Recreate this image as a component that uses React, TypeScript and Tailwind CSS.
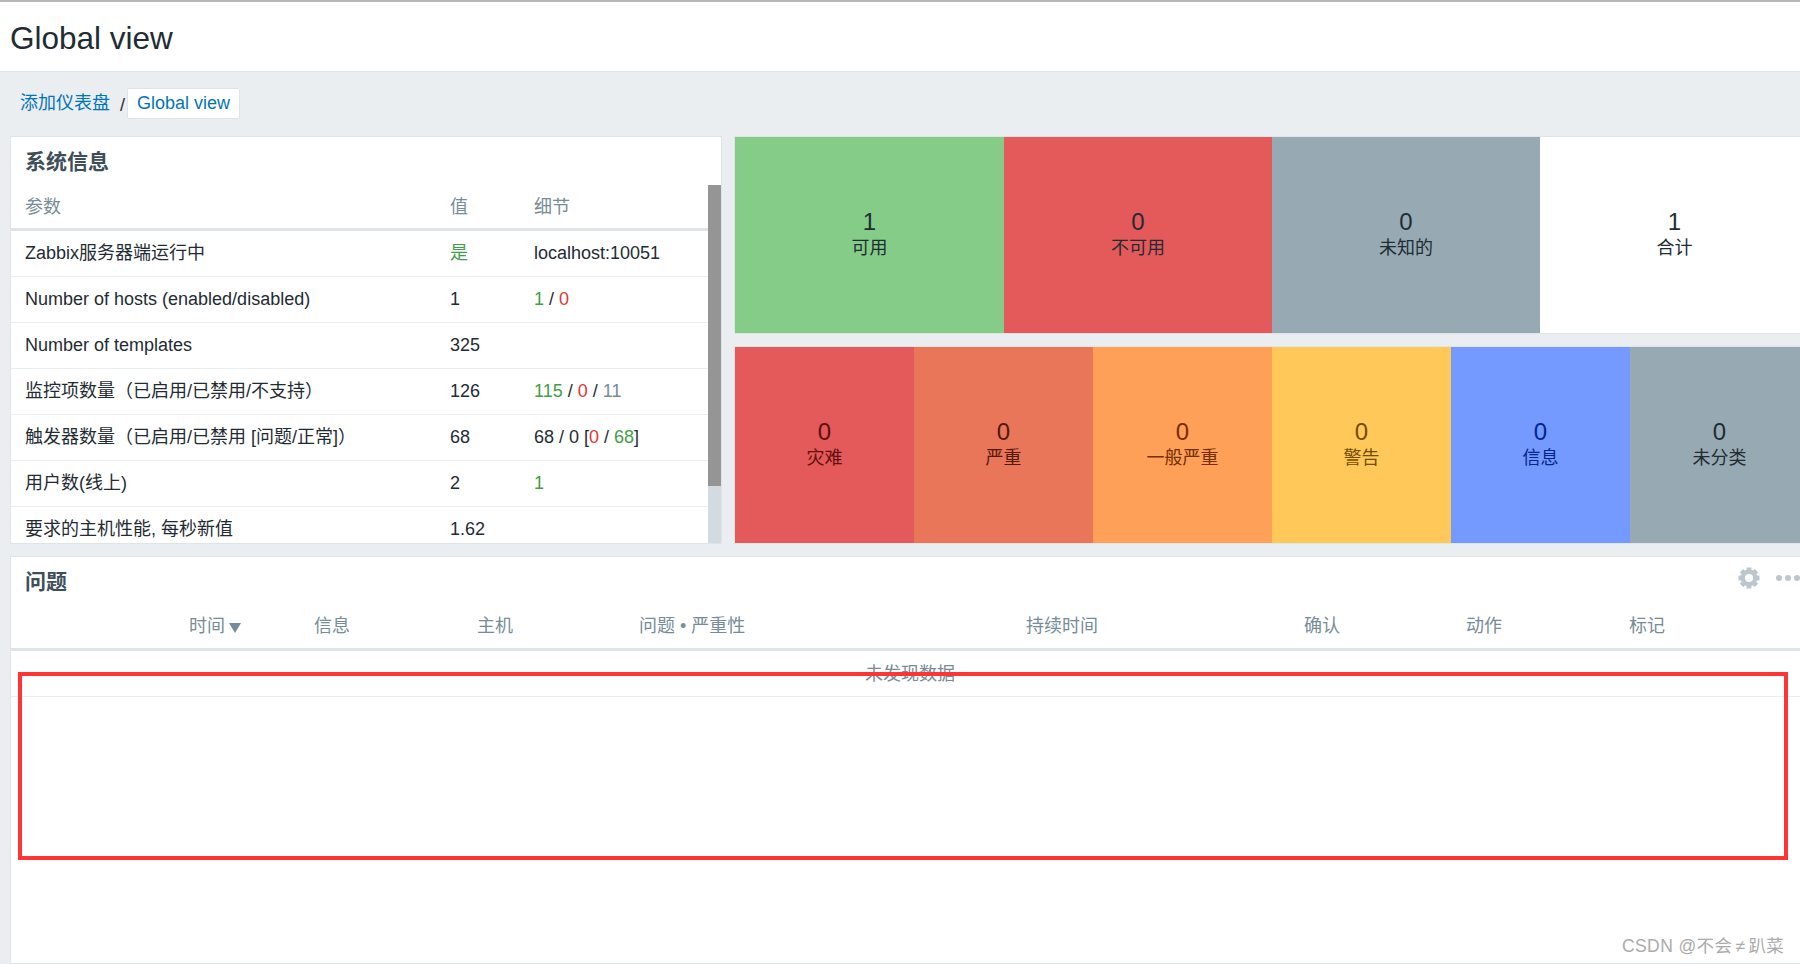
import React from 'react';

const font = 'font-["Liberation_Sans","Noto_Sans_CJK_SC",sans-serif]';

const statusTiles = [
  { value: '1', label: '可用', className: 'w-[269px] bg-[#86cc89] text-[#1f2c33]' },
  { value: '0', label: '不可用', className: 'w-[268px] bg-[#e45959] text-[#1f2c33]' },
  { value: '0', label: '未知的', className: 'w-[268px] bg-[#97aab3] text-[#1f2c33]' },
  { value: '1', label: '合计', className: 'w-[269px] bg-white text-[#1f2c33]' },
];

const severityTiles = [
  { value: '0', label: '灾难', className: 'w-[179px] bg-[#e45959] text-[#5f0f0f]' },
  { value: '0', label: '严重', className: 'w-[179px] bg-[#e97659] text-[#52190b]' },
  { value: '0', label: '一般严重', className: 'w-[179px] bg-[#ffa059] text-[#732f00]' },
  { value: '0', label: '警告', className: 'w-[179px] bg-[#ffc859] text-[#734d00]' },
  { value: '0', label: '信息', className: 'w-[179px] bg-[#7499ff] text-[#00268e]' },
  { value: '0', label: '未分类', className: 'w-[179px] bg-[#97aab3] text-[#1f2c33]' },
];

const Green = ({ children }: { children: React.ReactNode }) => <span className="text-[#429e47]">{children}</span>;
const Red = ({ children }: { children: React.ReactNode }) => <span className="text-[#e33734]">{children}</span>;
const Gray = ({ children }: { children: React.ReactNode }) => <span className="text-[#768d99]">{children}</span>;

const infoRows: { name: string; value: React.ReactNode; detail?: React.ReactNode }[] = [
  { name: 'Zabbix服务器端运行中', value: <Green>是</Green>, detail: 'localhost:10051' },
  { name: 'Number of hosts (enabled/disabled)', value: '1', detail: <><Green>1</Green> / <Red>0</Red></> },
  { name: 'Number of templates', value: '325' },
  { name: '监控项数量（已启用/已禁用/不支持）', value: '126', detail: <><Green>115</Green> / <Red>0</Red> / <Gray>11</Gray></> },
  { name: '触发器数量（已启用/已禁用 [问题/正常]）', value: '68', detail: <>68 / 0 [<Red>0</Red> / <Green>68</Green>]</> },
  { name: '用户数(线上)', value: '2', detail: <Green>1</Green> },
  { name: '要求的主机性能, 每秒新值', value: '1.62' },
];

const problemCols = [
  { label: '时间', width: 'w-[125px]', sort: true },
  { label: '信息', width: 'w-[163px]' },
  { label: '主机', width: 'w-[162px]' },
  { label: '问题 • 严重性', width: 'w-[387px]' },
  { label: '持续时间', width: 'w-[278px]' },
  { label: '确认', width: 'w-[162px]' },
  { label: '动作', width: 'w-[163px]' },
  { label: '标记', width: 'w-[100px]' },
];

function Gear() {
  return (
    <svg viewBox="0 0 22 22" className="w-[22px] h-[22px]" fill="#bbc6cd">
      {[0, 45, 90, 135, 180, 225, 270, 315].map((deg) => (
        <rect key={deg} x="8.6" y="0.5" width="4.8" height="5" transform={`rotate(${deg} 11 11)`} />
      ))}
      <circle cx="11" cy="11" r="6.2" fill="none" stroke="#bbc6cd" strokeWidth="4.4" />
    </svg>
  );
}

function Tile({ value, label, className }: { value: string; label: string; className: string }) {
  return (
    <div className={`shrink-0 flex flex-col items-center justify-center ${className}`}>
      <div className="text-[24px] leading-[26px]">{value}</div>
      <div className="text-[18px] leading-[26px]">{label}</div>
    </div>
  );
}

function SystemInfo() {
  return (
    <div className="w-[712px] h-[408px] shrink-0 bg-white border border-[#dfe4e7] flex flex-col overflow-hidden">
      <h4 className="h-[48px] shrink-0 pl-[14px] pt-[2px] flex items-center text-[21px] font-bold text-[#3e4f5a]">系统信息</h4>
      <div className="flex-1 flex min-h-0">
        <div className="flex-1 overflow-hidden">
          <div className="h-[46px] flex items-center pl-[14px] pt-[1px] border-b-[3px] border-[#dfe4e7] text-[18px] text-[#768d99]">
            <div className="w-[425px]">参数</div>
            <div className="w-[84px]">值</div>
            <div>细节</div>
          </div>
          {infoRows.map((row) => (
            <div key={row.name} className="h-[46px] flex items-center pl-[14px] border-b border-[#ebeef0] text-[18px] text-[#1f2c33]">
              <div className="w-[425px] whitespace-nowrap">{row.name}</div>
              <div className="w-[84px]">{row.value}</div>
              <div className="whitespace-nowrap">{row.detail}</div>
            </div>
          ))}
        </div>
        <div className="w-[13px] shrink-0 bg-[#d3dae0]">
          <div className="h-[301px] bg-[#959595]" />
        </div>
      </div>
    </div>
  );
}

function Problems() {
  return (
    <div className="relative w-[1802px] flex-1 bg-white border border-[#dfe4e7]">
      <div className="absolute left-[1727px] top-[10px] flex items-center gap-[16px]">
        <Gear />
        <div className="flex gap-[3px]">
          <span className="w-[6px] h-[6px] rounded-full bg-[#bbc6cd]" />
          <span className="w-[6px] h-[6px] rounded-full bg-[#bbc6cd]" />
          <span className="w-[6px] h-[6px] rounded-full bg-[#bbc6cd]" />
        </div>
      </div>
      <h4 className="h-[48px] pl-[14px] pt-[2px] flex items-center text-[21px] font-bold text-[#3e4f5a]">问题</h4>
      <div className="h-[46px] flex items-center pl-[178px] border-b-[3px] border-[#dfe4e7] text-[18px] text-[#768d99]">
        {problemCols.map((col) => (
          <div key={col.label} className={`${col.width} shrink-0 flex items-center`}>
            {col.label}
            {col.sort && <span className="ml-[4px] w-0 h-0 border-x-[6px] border-x-transparent border-t-[10px] border-t-[#768d99] mt-[2px]" />}
          </div>
        ))}
      </div>
      <div className="h-[46px] flex items-center justify-center pr-[2px] pt-[2px] border-b border-[#ebeef0] text-[18px] text-[#768d99]">未发现数据</div>
    </div>
  );
}

export default function App() {
  return (
    <div className={`relative w-[1800px] h-[964px] overflow-hidden bg-[#ebeef0] flex flex-col ${font}`}>
      <div className="h-[72px] shrink-0 bg-white border-t-2 border-t-[#b8b8b8] border-b border-b-[#dfe4e7] flex items-center pl-[10px] pt-[4px]">
        <h1 className="text-[31.5px] text-[#1f2c33]">Global view</h1>
      </div>
      <div className="h-[64px] shrink-0 pt-[16px] pl-[20px] flex items-start text-[18px]">
        <a className="text-[#0275b8] h-[31px] leading-[30px]">添加仪表盘</a>
        <span className="text-[#1f2c33] ml-[10px] h-[31px] leading-[34px] w-[7px]">/</span>
        <a className="h-[31px] px-[9px] bg-white border border-[#dfe4e7] rounded-[2px] text-[#0275b8] leading-[29px]">Global view</a>
      </div>
      <div className="flex-1 flex flex-col pl-[10px] gap-[12px] min-h-0">
        <div className="flex gap-[12px] h-[408px] shrink-0">
          <SystemInfo />
          <div className="w-[1076px] shrink-0 flex flex-col gap-[12px]">
            <div className="flex-1 flex border border-[#dfe4e7]">
              {statusTiles.map((t) => <Tile key={t.label} {...t} />)}
            </div>
            <div className="flex-1 flex border border-[#dfe4e7]">
              {severityTiles.map((t) => <Tile key={t.label} {...t} />)}
            </div>
          </div>
        </div>
        <Problems />
      </div>
      <div className="absolute left-[18px] top-[672px] w-[1770px] h-[188px] border-[4px] border-[#ff3535]" />
      <div className="absolute left-[1622px] top-[936px] text-[17.5px] leading-[20px] tracking-[0.4px] text-[#ababab] whitespace-nowrap">CSDN @不会<span className="mx-[3px]">≠</span>趴菜</div>
    </div>
  );
}
